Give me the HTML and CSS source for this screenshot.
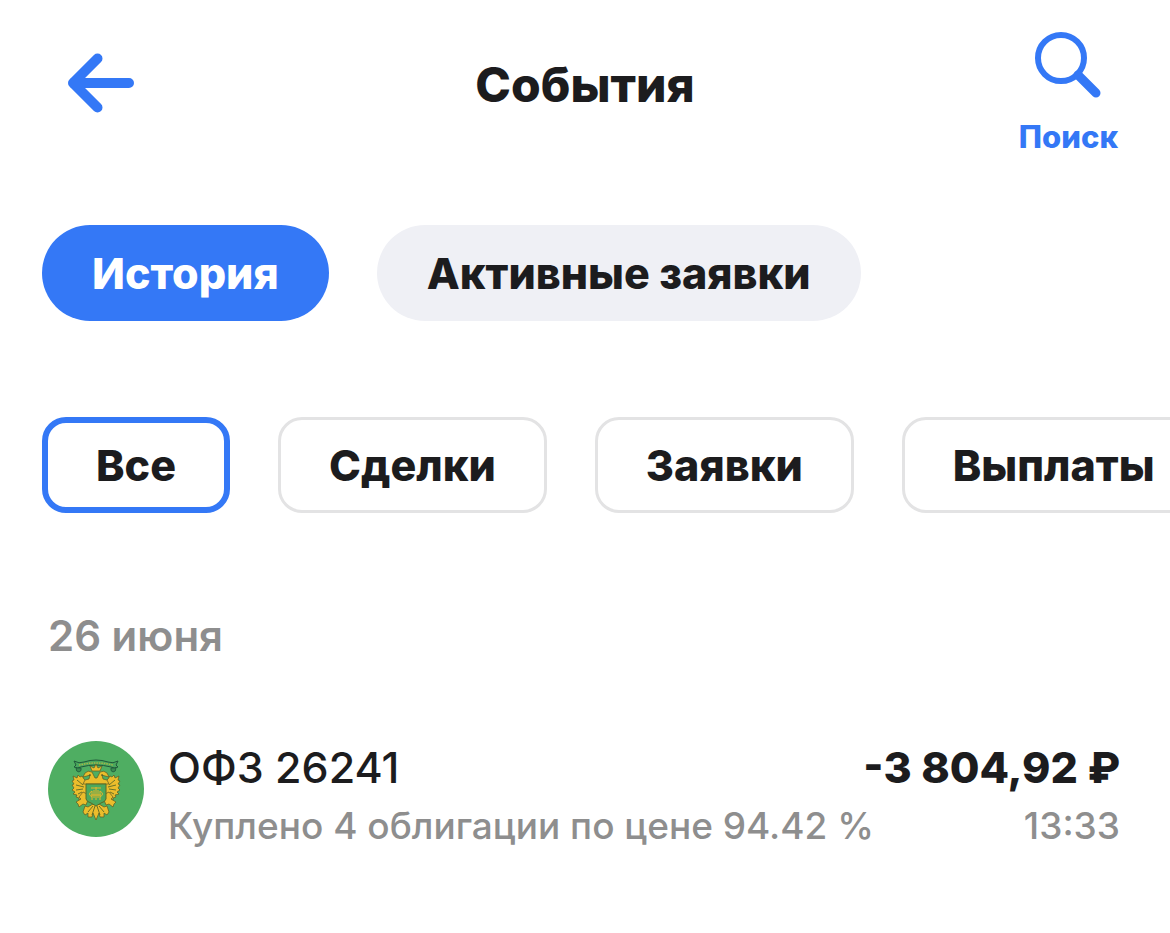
FILE: index.html
```html
<!DOCTYPE html>
<html lang="ru">
<head>
    <meta charset="UTF-8">
    <meta name="viewport" content="width=device-width, initial-scale=1.0">
    <title>События</title>
    <link rel="stylesheet" href="styles.css">
</head>
<body>

    <header class="header">
        <button class="back" type="button" aria-label="Назад">
            <svg width="66" height="60" viewBox="0 0 66 60">
                <path d="M29.500 5.500 5 30l24.500 24.500M8 30h53" />
                <path class="solid" d="M2 26 16 20v20L2 34z" />
            </svg>
        </button>
        <h1>События</h1>
        <button class="search" type="button">
            <svg width="68" height="68" viewBox="0 0 68 68">
                <circle cx="27" cy="27" r="23" />
                <path d="M44 44 62 62" />
            </svg>
            <span>Поиск</span>
        </button>
    </header>

    <main>
        <div class="tabs">
            <button class="tab active" type="button">История</button>
            <button class="tab" type="button">Активные заявки</button>
        </div>

        <div class="filters">
            <button class="filter active" type="button">Все</button>
            <button class="filter" type="button">Сделки</button>
            <button class="filter" type="button">Заявки</button>
            <button class="filter" type="button">Выплаты</button>
        </div>

        <section class="day">
            <h2>26 июня</h2>
            <div class="event">
                <svg class="logo" width="96" height="96" viewBox="0 0 96 96">
                    <circle cx="48" cy="48" r="48" fill="#4fae62" />
                    <!-- лента -->
                    <path d="M26 20q5 3 10 1 12-4 24 0 5 2 10-1l-2 4 2 2q-4 2-7 0-15-4-30 0-3 2-7 0l2-2z" fill="#4aa85d" stroke="#20583b" stroke-width="1" stroke-linejoin="round" />
                    <path d="M28 27q0 4 3 4 3-1 2-4zM68 27q0 4-3 4-3-1-2-4z" fill="#3a8d50" stroke="#20583b" stroke-width=".8" />
                    <path d="M31 24q17-4 34 0" fill="none" stroke="#a9b548" stroke-width="1.500" stroke-dasharray="1.500 1" />
                    <!-- орёл -->
                    <g fill="#ebbd2c" stroke="#5b5a22" stroke-width=".7" stroke-linejoin="round">
                        <path d="M39 41 36 38l-2-3-2 1-2-2-1 3-4-2 1 4-2 1 2 3-2 1 2 3-2 2 3 2-2 2 4 1-1 2 3 1 0 2 4-1 0-4 4-1z" />
                        <path d="M57 41 60 38l2-3 2 1 2-2 1 3 4-2-1 4 2 1-2 3 2 1-2 3 2 2-3 2 2 2-4 1 1 2-3 1 0 2-4-1 0-4-4-1z" />
                        <path d="M35 43 37 39l4-1 1-4-3 1-4 1 2-4q3-3 7-1l3 6h2l3-6q4-2 7 1l2 4-4-1-3-1 1 4 4 1 2 4z" />
                        <path d="M44 30 42 25l4 2 2-4 2 4 4-2-2 5z" />
                        <path d="M39 53 35 51 31 56l2 2-5 3 2 2 1 3 4-3 3 1 2-5z" />
                        <path d="M57 53 61 51 65 56l-2 2 5 3-2 2-1 3-4-3-3 1-2-5z" />
                        <path d="M45 63 40 66l-3-1-2 6 2 3 3-2 0 4 4 0 1-4 3 7 3-7 1 4 4 0 0-4 3 2 2-3-2-6-3 1-5-3z" />
                    </g>
                    <path d="M29 39l6 5M28 44l8 2M28 49l7-1M30 53l4-2M67 39l-6 5M68 44l-8 2M68 49l-7-1M66 53l-4-2M45 65l-5 6M51 65l5 6M47 65l-3 9M49 65l3 9" fill="none" stroke="#5b6a26" stroke-width=".9" />
                    <circle cx="42" cy="34" r=".8" fill="#3d4a22" />
                    <circle cx="54" cy="34" r=".8" fill="#3d4a22" />
                    <path d="M45 31h6l-3 5z" fill="#4fae62" />
                    <!-- щит -->
                    <path d="M38 43h20v15q-1 3-5 4l-5 3-5-3q-4-1-5-4z" fill="#4aa85d" stroke="#5b6a26" stroke-width="1" />
                    <path d="M48 46v13M43 47h10M44 50q-5 3 0 6M52 50q5 3 0 6M46 49v8M50 49v8M44 50v9M52 50v9M43 54h10" fill="none" stroke="#e5b62b" stroke-width="1" />
                </svg>
                <div class="info">
                    <div class="row main-row">
                        <span class="name">ОФЗ 26241</span>
                        <span class="amount">-3 804,92 ₽</span>
                    </div>
                    <div class="row note">
                        <span>Куплено 4 облигации по цене 94.42 %</span>
                        <span>13:33</span>
                    </div>
                </div>
            </div>
        </section>
    </main>

</body>
</html>
```
FILE: styles.css
```css
* { box-sizing: border-box; }
body { margin: 0; background-color: #fff; color: #1c1c1e; font-family: Inter, "Liberation Sans", sans-serif; }
h1, h2 { margin: 0; }
button { padding: 0; border: none; background: none; color: inherit; font-family: inherit; cursor: pointer; white-space: nowrap; }

.header { display: grid; grid-template-columns: 1fr auto 1fr; align-items: start; padding: 31px 52px 0; }
.header h1 { padding-top: 24px; font-size: 48px; font-weight: 800; line-height: 60px; }
.header svg { display: block; fill: none; stroke: #3478f6; stroke-linecap: round; }
.back { justify-self: start; margin-left: 16px; padding-top: 22px; }
.back svg { stroke-width: 10px; stroke-linejoin: round; }
.back .solid { fill: #3478f6; stroke: none; }
.search { display: flex; flex-direction: column; align-items: center; justify-self: end; gap: 20px; color: #3478f6; font-size: 31px; font-weight: 800; line-height: 36px; }
.search svg { stroke-width: 6px; }
.search path { stroke-width: 9px; }

.tabs, .filters { display: flex; gap: 48px; padding: 0 42px; }
.tabs { margin-top: 70px; }
.tab { height: 96px; padding: 0 50px; border-radius: 48px; background-color: #eff0f5; font-size: 43px; font-weight: 800; }
.tab.active { background-color: #3478f6; color: #fff; }

.filters { margin-top: 96px; overflow: hidden; }
.filter { flex: none; height: 96px; padding: 0 48px; border: 3px solid #e3e3e4; border-radius: 24px; font-size: 43px; font-weight: 800; }
.filter.active { border: 6px solid #3478f6; }

.day { padding: 96px 50px 0 48px; }
.day h2 { color: #8e8e8e; font-size: 42px; font-weight: 600; line-height: 54px; }
.event { display: flex; gap: 24px; margin-top: 78px; }
.logo { flex: none; }
.info { flex: 1; }
.row { display: flex; justify-content: space-between; gap: 24px; }
.main-row { font-size: 43px; line-height: 52px; }
.name { font-weight: 500; }
.amount { font-weight: 800; }
.note { margin-top: 10px; color: #8e8e8e; font-size: 37px; font-weight: 500; line-height: 46px; }
```
